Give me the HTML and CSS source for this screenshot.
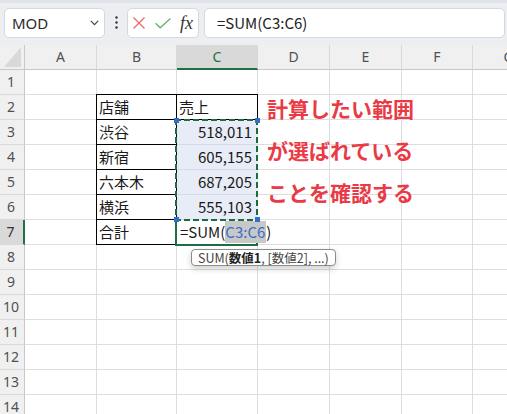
FILE: index.html
```html
<!DOCTYPE html>
<html lang="ja">
    <head>
        <meta charset="UTF-8" />
        <meta name="viewport" content="width=device-width, initial-scale=1.0" />
        <title>SUM</title>
        <link rel="stylesheet" href="styles.css">
    </head>
    <body>
        <div class="topbar">
            <div class="namebox">
                <span>MOD</span>
                <svg width="9" height="6" viewBox="0 0 9 6"><path d="M0.8 0.8 L4.5 4.6 L8.2 0.8" fill="none" stroke="#444" stroke-width="1.2"/></svg>
            </div>
            <div class="kebab">
                <svg width="3" height="14" viewBox="0 0 3 14"><circle cx="1.5" cy="1.5" r="1.2" fill="#333"/><circle cx="1.5" cy="6.5" r="1.2" fill="#333"/><circle cx="1.5" cy="11.5" r="1.2" fill="#333"/></svg>
            </div>
            <div class="fxbox">
                <svg width="12" height="12" viewBox="0 0 12 12"><path d="M0.5 0.5 L11.5 11.5 M11.5 0.5 L0.5 11.5" stroke="#e36b6b" stroke-width="1.3"/></svg>
                <svg width="16" height="11" viewBox="0 0 16 11"><path d="M0.6 5.2 L5.2 9.8 L15.4 0.6" fill="none" stroke="#5fb56c" stroke-width="1.3"/></svg>
                <span class="fx">fx</span>
            </div>
            <div class="formula">=SUM(C3:C6)</div>
        </div>

        <div class="sheet">
            <div class="corner"><svg width="24" height="24" viewBox="0 0 24 24"><polygon points="21,2 21,22 4,22" fill="#d9d9d9"/></svg></div>
            <div class="col">A</div><div class="col">B</div><div class="col sel">C</div><div class="col">D</div><div class="col">E</div><div class="col">F</div><div class="col">G</div>

            <div class="rn">1</div><div></div><div></div><div></div><div></div><div></div><div></div><div></div>
            <div class="rn">2</div><div></div><div class="box box-tl">店舗</div><div class="box box-t">売上</div><div></div><div></div><div></div><div></div>
            <div class="rn">3</div><div></div><div class="box box-l">渋谷</div><div class="pick">518,011</div><div></div><div></div><div></div><div></div>
            <div class="rn">4</div><div></div><div class="box box-l">新宿</div><div class="pick">605,155</div><div></div><div></div><div></div><div></div>
            <div class="rn">5</div><div></div><div class="box box-l">六本木</div><div class="pick">687,205</div><div></div><div></div><div></div><div></div>
            <div class="rn">6</div><div></div><div class="box box-l">横浜</div><div class="pick">555,103</div><div></div><div></div><div></div><div></div>
            <div class="rn sel">7</div><div></div><div class="box box-l">合計</div><div class="edit">=SUM(<span class="ref">C3:C6</span>)</div><div></div><div></div><div></div><div></div>
            <div class="rn">8</div><div></div><div></div><div></div><div></div><div></div><div></div><div></div>
            <div class="rn">9</div><div></div><div></div><div></div><div></div><div></div><div></div><div></div>
            <div class="rn">10</div><div></div><div></div><div></div><div></div><div></div><div></div><div></div>
            <div class="rn">11</div><div></div><div></div><div></div><div></div><div></div><div></div><div></div>
            <div class="rn">12</div><div></div><div></div><div></div><div></div><div></div><div></div><div></div>
            <div class="rn">13</div><div></div><div></div><div></div><div></div><div></div><div></div><div></div>
            <div class="rn">14</div><div></div><div></div><div></div><div></div><div></div><div></div><div></div>

            <!-- overlays -->
            <div class="marquee"></div>
            <div class="handle h1"></div>
            <div class="handle h2"></div>
            <div class="handle h3"></div>
            <div class="handle h4"></div>
            <div class="active"></div>
            <div class="tip">SUM(<b>数値1</b>, [数値2], ...)</div>
            <div class="note">
                <div>計算したい範囲</div>
                <div>が選ばれている</div>
                <div>ことを確認する</div>
            </div>
        </div>
    </body>
</html>
```

FILE: styles.css
```css
* {
    box-sizing: border-box;
}

body {
    margin: 0;
    width: 507px;
    height: 414px;
    overflow: hidden;
    background: #fff;
    font-family: "Noto Sans CJK JP", "Noto Sans", sans-serif;
    color: #1a1a1a;
}

/* formula bar */
.topbar {
    height: 45px;
    background: #eceef1;
    border-top: 3px solid #e0e3e7;
    padding: 5px 2px 0 4px;
    display: flex;
    align-items: flex-start;
}

.namebox {
    width: 101px;
    height: 30px;
    background: #fff;
    border: 1px solid #d5d8dd;
    border-radius: 5px;
    padding: 0 5px 0 7px;
    display: flex;
    align-items: center;
    justify-content: space-between;
    font-family: "Noto Sans", sans-serif;
    font-size: 15px;
    color: #2a2a2a;
}

.kebab {
    width: 22px;
    height: 30px;
    display: flex;
    align-items: center;
    justify-content: center;
}

.fxbox {
    width: 72px;
    height: 30px;
    margin-right: 5px;
    background: #fff;
    border: 1px solid #d5d8dd;
    border-radius: 5px;
    padding-left: 5px;
    display: flex;
    align-items: center;
    gap: 10px;
}

.fx {
    margin-left: -1px;
    font-family: "Liberation Serif", serif;
    font-style: italic;
    font-size: 18px;
    color: #333;
}

.formula {
    flex: 1;
    height: 30px;
    background: #fff;
    border: 1px solid #d5d8dd;
    border-radius: 5px;
    padding-left: 12px;
    font-size: 15px;
    line-height: 27px;
    color: #222;
}

/* grid */
.sheet {
    position: relative;
    display: grid;
    grid-template-columns: 25px 72px 80px 81px 72px 72px 71px 72px;
    grid-auto-rows: 25px;
}

.sheet > div {
    border-right: 1px solid #dedede;
    border-bottom: 1px solid #dedede;
    padding: 0 2px;
    font-size: 15px;
    line-height: 24px;
    white-space: nowrap;
}

.sheet > .corner {
    background: #f0f0f0;
    border-right-color: #c8c8c8;
    border-bottom-color: #c8c8c8;
    padding: 0;
}

.corner svg {
    display: block;
}

.sheet > .col {
    background: #f0f0f0;
    border-right-color: #d9d9d9;
    border-bottom-color: #c8c8c8;
    text-align: center;
    font-family: "Noto Sans", sans-serif;
    font-size: 14px;
    color: #505050;
}

.sheet > .rn {
    background: #f0f0f0;
    border-right-color: #c8c8c8;
    border-bottom-color: #d9d9d9;
    padding: 0 2px 0 0;
    text-align: center;
    font-family: "Noto Sans", sans-serif;
    font-size: 14px;
    color: #505050;
}

.sheet > .col.sel {
    background: #d9d9d9;
    border-bottom: 2px solid #1e7145;
    color: #1e7145;
}

.sheet > .rn.sel {
    background: #d9d9d9;
    border-right: 2px solid #1e7145;
    color: #333;
}

/* table B2:C7 */
.sheet > .box {
    border-right-color: #000;
    border-bottom-color: #000;
}

.box-tl {
    box-shadow: -1px 0 0 #000, 0 -1px 0 #000, -1px -1px 0 #000;
}

.box-t {
    box-shadow: 0 -1px 0 #000;
}

.box-l {
    box-shadow: -1px 0 0 #000;
}

.sheet > .pick {
    background: #e7ecf6;
    border-right-color: #e7ecf6;
    border-bottom-color: #d3dbe8;
    padding-right: 5px;
    text-align: right;
}

.sheet > .edit {
    z-index: 3;
    padding-left: 3px;
    border-right: 0;
    border-bottom: 0;
}

.ref {
    display: inline-block;
    line-height: 22px;
    padding-right: 1px;
    background: #c8c8c8;
    color: #3a6fc4;
}

/* overlays */
.sheet > .marquee {
    position: absolute;
    left: 175px;
    top: 74px;
    width: 83px;
    height: 102px;
    z-index: 2;
    border: 0;
    padding: 0;
    background:
        repeating-linear-gradient(90deg, #1f6b40 0 6px, transparent 6px 9px) top / 100% 2px no-repeat,
        repeating-linear-gradient(90deg, #1f6b40 0 6px, transparent 6px 9px) bottom / 100% 2px no-repeat,
        repeating-linear-gradient(180deg, #1f6b40 0 6px, transparent 6px 9px) left / 2px 100% no-repeat,
        repeating-linear-gradient(180deg, #1f6b40 0 6px, transparent 6px 9px) right / 2px 100% no-repeat;
}

.sheet > .active {
    position: absolute;
    left: 175px;
    top: 176px;
    width: 83px;
    height: 25px;
    z-index: 2;
    border: 2px solid #1f6e43;
    border-top: 0;
    padding: 0;
}

.sheet > .handle {
    position: absolute;
    width: 5px;
    height: 5px;
    z-index: 4;
    background: #2f6fc9;
    border: 0;
    padding: 0;
}

.h1 { left: 174px; top: 73px; }
.h2 { left: 255px; top: 73px; }
.h3 { left: 174px; top: 172px; }
.h4 { left: 255px; top: 172px; }

.sheet > .tip {
    position: absolute;
    left: 191px;
    top: 204px;
    height: 17px;
    z-index: 5;
    padding: 0 6px;
    background: #fff;
    border: 1px solid #8c8c8c;
    border-radius: 4px;
    box-shadow: 0 3px 6px rgba(0, 0, 0, 0.18);
    font-size: 12.5px;
    line-height: 15px;
    color: #444;
}

.tip b {
    color: #222;
}

.sheet > .note {
    position: absolute;
    left: 267px;
    top: 42px;
    z-index: 1;
    border: 0;
    padding: 0;
    font-size: 21px;
    font-weight: bold;
    line-height: 42px;
    color: #ea3a45;
}
```
